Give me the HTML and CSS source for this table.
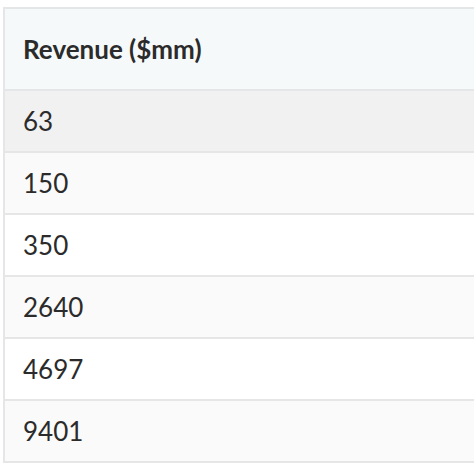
FILE: index.html
```html
<!DOCTYPE html>
<html>
<head>
<meta charset="utf-8">
<link rel="stylesheet" href="styles.css">
</head>
<body>
<table class="data">
  <thead>
    <tr><th>Revenue ($mm)</th></tr>
  </thead>
  <tbody>
    <tr class="hover"><td>63</td></tr>
    <tr class="alt"><td>150</td></tr>
    <tr><td>350</td></tr>
    <tr class="alt"><td>2640</td></tr>
    <tr><td>4697</td></tr>
    <tr class="alt"><td>9401</td></tr>
  </tbody>
</table>
</body>
</html>
```
FILE: styles.css
```css
html, body {
  margin: 0;
  padding: 0;
  background: #ffffff;
}
body {
  padding: 7px 0 0 3px;
  font-family: Lato, "Open Sans", sans-serif;
  color: #2b2b2b;
}
.data {
  border-collapse: collapse;
  width: 471px;
  border-top: 2px solid #e4e6e7;
  border-left: 2px solid #e4e6e7;
}
.data th {
  text-align: left;
  font-weight: 700;
  font-size: 26px;
  height: 80px;
  padding: 0 0 0 18px;
  background: #f6f9fa;
  border-bottom: 2px solid #e4e6e7;
}
.data td {
  font-size: 26px;
  height: 60px;
  padding: 0 0 0 18px;
  background: #ffffff;
  border-bottom: 2px solid #e6e6e6;
}
.data tr.alt td {
  background: #fafafa;
}
.data tr.hover td {
  background: #f1f1f1;
}
```
